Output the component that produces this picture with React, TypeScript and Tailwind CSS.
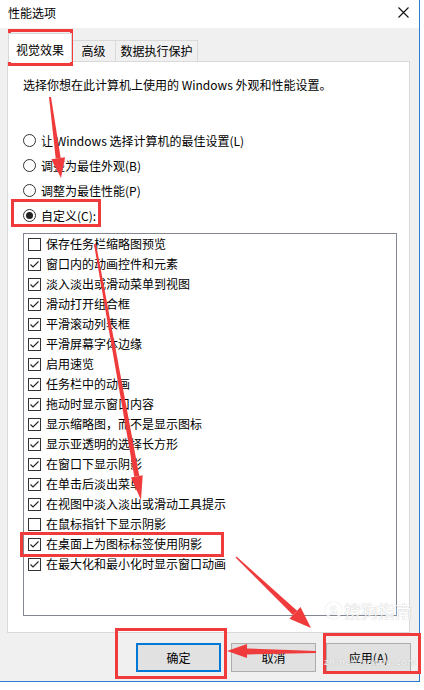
import React from "react";

const items: [string, boolean][] = [
  ["保存任务栏缩略图预览", false],
  ["窗口内的动画控件和元素", true],
  ["淡入淡出或滑动菜单到视图", true],
  ["滑动打开组合框", true],
  ["平滑滚动列表框", true],
  ["平滑屏幕字体边缘", true],
  ["启用速览", true],
  ["任务栏中的动画", true],
  ["拖动时显示窗口内容", true],
  ["显示缩略图，而不是显示图标", true],
  ["显示亚透明的选择长方形", true],
  ["在窗口下显示阴影", true],
  ["在单击后淡出菜单", true],
  ["在视图中淡入淡出或滑动工具提示", true],
  ["在鼠标指针下显示阴影", false],
  ["在桌面上为图标标签使用阴影", true],
  ["在最大化和最小化时显示窗口动画", true],
];

const radios: [string, boolean][] = [
  ["让 Windows 选择计算机的最佳设置(L)", false],
  ["调整为最佳外观(B)", false],
  ["调整为最佳性能(P)", false],
  ["自定义(C):", true],
];

function CheckBox({ checked }: { checked: boolean }) {
  return (
    <div className="w-[13px] h-[13px] border border-[#333333] bg-white shrink-0 flex items-center justify-center">
      {checked && (
        <svg width="11" height="11" viewBox="0 0 11 11">
          <polyline points="1.5,5.5 4,8 9.5,2.5" fill="none" stroke="#222" strokeWidth="1.1" />
        </svg>
      )}
    </div>
  );
}

function Radio({ checked }: { checked: boolean }) {
  return (
    <div className="w-[13px] h-[13px] rounded-full border border-[#333333] bg-white shrink-0 flex items-center justify-center">
      {checked && <div className="w-[7px] h-[7px] rounded-full bg-[#222]" />}
    </div>
  );
}

export default function App() {
  return (
    <div className="relative w-[424px] h-[690px] bg-white overflow-hidden font-['Noto_Sans_CJK_SC','Microsoft_YaHei',sans-serif] text-[12px] text-black">
      <div className="w-[420px] h-[682px] border-r border-b border-[#2b7bd3] flex flex-col">
        {/* title bar */}
        <div className="h-[28px] bg-white flex items-center justify-between pl-[8px] pr-[10px] shrink-0">
          <span className="leading-none -mt-[2px]">性能选项</span>
          <svg width="11" height="11" viewBox="0 0 11 11" className="-mt-[4px]">
            <path d="M0.5 0.5 L10.5 10.5 M10.5 0.5 L0.5 10.5" stroke="#111" strokeWidth="1.1" />
          </svg>
        </div>
        {/* body */}
        <div className="flex-1 bg-[#f0f0f0] px-[7px] pt-[5px] flex flex-col">
          {/* tabs */}
          <div className="flex items-end h-[28px] pl-px">
            <div className="relative z-10 h-[29px] -mb-px w-[64px] bg-white border border-b-0 border-[#d9d9d9] flex items-center justify-center pt-[4px]">
              视觉效果
            </div>
            <div className="h-[21px] w-[44px] border border-b-0 border-l-0 border-[#d9d9d9] flex items-center justify-center">
              高级
            </div>
            <div className="h-[21px] w-[82px] border border-b-0 border-l-0 border-[#d9d9d9] flex items-center justify-center">
              数据执行保护
            </div>
          </div>
          {/* panel */}
          <div className="w-[403px] h-[572px] bg-white border border-[#d9d9d9] pl-[15px] pt-[15px] flex flex-col">
            <div className="h-[16px] leading-[16px]">选择你想在此计算机上使用的 Windows 外观和性能设置。</div>
            <div className="mt-[35px] flex flex-col">
              {radios.map(([label, c]) => (
                <div key={label} className="h-[25px] flex items-center gap-[5px]">
                  <Radio checked={c} />
                  <span>{label}</span>
                </div>
              ))}
            </div>
            <div className="mt-[5px] w-[374px] h-[383px] border border-[#828790] pl-[4px] flex flex-col">
              {items.map(([label, c]) => (
                <div key={label} className="h-[20px] flex items-center gap-[5px]">
                  <CheckBox checked={c} />
                  <span>{label}</span>
                </div>
              ))}
            </div>
          </div>
          {/* buttons */}
          <div className="mt-[10px] flex justify-end gap-[10px] pr-[1px]">
            <button className="w-[85px] h-[29px] bg-[#e1e1e1] border-2 border-[#0078d7] flex items-center justify-center">确定</button>
            <button className="w-[85px] h-[29px] bg-[#e1e1e1] border border-[#adadad] flex items-center justify-center">取消</button>
            <button className="w-[85px] h-[29px] bg-[#e1e1e1] border border-[#adadad] flex items-center justify-center">应用(A)</button>
          </div>
        </div>
      </div>

      {/* red annotation boxes */}
      <div className="absolute left-[8px] top-[29px] w-[65px] h-[37px] border-[3px] border-[#ef3b3b]" />
      <div className="absolute left-[11px] top-[199px] w-[90px] h-[28px] border-[3px] border-[#ef3b3b]" />
      <div className="absolute left-[20px] top-[532px] w-[204px] h-[25px] border-[3px] border-[#ef3b3b]" />
      <div className="absolute left-[115px] top-[628px] w-[112px] h-[51px] border-[3px] border-[#ef3b3b]" />
      <div className="absolute left-[323px] top-[633px] w-[98px] h-[41px] border-[3px] border-[#ef3b3b]" />

      {/* watermark */}
      <div className="absolute left-[325px] top-[602px] flex items-center gap-[2px] text-white opacity-80 [text-shadow:0_0_1px_#9a9a9a]">
        <div className="w-[17px] h-[17px] rounded-full border-2 border-white flex items-center justify-center text-[11px] font-bold leading-none [box-shadow:0_0_1px_#9a9a9a]">S</div>
        <span className="text-[17px] leading-none">搜狗指南</span>
      </div>
      <div className="absolute left-[324px] top-[655px] text-[9px] tracking-[1px] text-white opacity-80 [text-shadow:0_0_1px_#9a9a9a]">zhinan.sogou.com</div>

      {/* arrows */}
      <svg className="absolute left-0 top-0 pointer-events-none" width="424" height="690" viewBox="0 0 424 690">
        <g fill="#ef3b3b">
          <polygon points="51,96.9 49,97.1 55.7,158.6 60.7,157.9" />
          <polygon points="65.1,157.2 51.3,159.2 61,178" />
          <polygon points="96,243.8 94,244.2 134.3,476.8 139.3,476" />
          <polygon points="142.7,475.3 130.9,477.5 141,500" />
          <polygon points="236.5,556.5 235.5,557.5 292.9,615.1 297.1,610.7" />
          <polygon points="300.5,607.1 289.5,618.7 311,628" />
          <polygon points="316,651 316,653 247,654.5 247,648.5" />
          <polygon points="247,644 247,658 227,651" />
        </g>
      </svg>
    </div>
  );
}
